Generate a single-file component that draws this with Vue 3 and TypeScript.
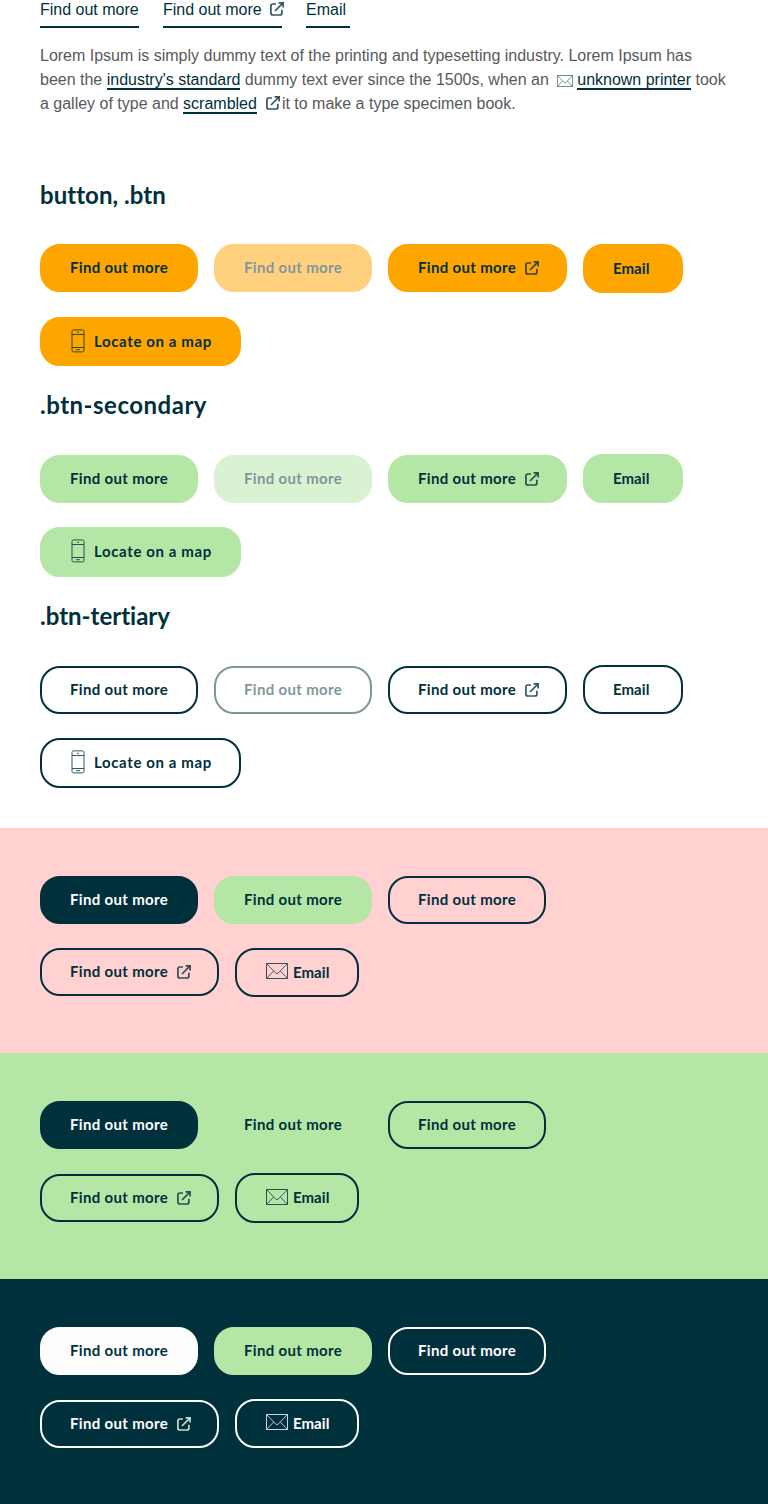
<script setup lang="ts">
import { defineComponent, h } from 'vue'

type IconName = 'external' | 'phone' | 'mail'

interface ButtonItem {
  label: string
  kind: string
  icon?: IconName
}

interface ButtonRow {
  align: string
  items: ButtonItem[]
}

const Icon = defineComponent({
  props: { name: { type: String, required: true } },
  setup(props) {
    return () => {
      if (props.name === 'external') {
        return h('svg', { viewBox: '0 0 14 14', width: 14, height: 14, fill: 'none', stroke: 'currentColor', 'stroke-width': 1.7 }, [
          h('path', { d: 'M6 2H2.9Q.9 2 .9 4v7q0 2 2 2h7q2 0 2-2V7.8' }),
          h('path', { d: 'M5 9 12.8 1.2M8.6.9h4.5v4.5' }),
        ])
      }
      if (props.name === 'phone') {
        return h('svg', { viewBox: '0 0 14 24', width: 14, height: 24, fill: 'none', stroke: 'currentColor', 'stroke-width': 1 }, [
          h('rect', { x: 1, y: 0.9, width: 12, height: 22, rx: 1.5 }),
          h('path', { d: 'M1 5.5h12M1 18.5h12M6 3.3h2M5 20.7h4' }),
        ])
      }
      return h('svg', { viewBox: '0 0 22 16', width: 22, height: 16, fill: 'none', stroke: 'currentColor', 'stroke-width': 1 }, [
        h('path', { d: 'M.5.5h21v15H.5z' }),
        h('path', { 'stroke-width': 0.9, d: 'M.5.5l9.3 9.6q1.2 1.2 2.4 0l9.3-9.6M.5 15.5l7-7.4M21.5 15.5l-7-7.4' }),
      ])
    }
  },
})

const find = 'Find out more'

function group(kind: string, align: string): ButtonRow[] {
  return [
    {
      align,
      items: [
        { label: find, kind },
        { label: find, kind: `${kind} disabled` },
        { label: find, kind, icon: 'external' },
        { label: 'Email', kind: `${kind} plain-mail` },
      ],
    },
    { align: 'second', items: [{ label: 'Locate on a map', kind, icon: 'phone' }] },
  ]
}

const groups = [
  { id: 'primary', title: 'button, .btn', rows: group('primary', 'top') },
  { id: 'secondary', title: '.btn-secondary', rows: group('secondary', 'bottom') },
  { id: 'tertiary', title: '.btn-tertiary', rows: group('tertiary', 'bottom') },
]

function band(first: string, outline: string, align: string): ButtonRow[] {
  return [
    {
      align: 'top',
      items: [
        { label: find, kind: first },
        { label: find, kind: 'secondary' },
        { label: find, kind: outline },
      ],
    },
    {
      align: `second ${align}`,
      items: [
        { label: find, kind: outline, icon: 'external' },
        { label: 'Email', kind: outline, icon: 'mail' },
      ],
    },
  ]
}

const bands = [
  { id: 'pink', rows: band('solid', 'tertiary', 'top') },
  { id: 'green', rows: band('solid', 'tertiary', 'middle') },
  { id: 'dark', rows: band('white', 'inverse', 'bottom') },
]
</script>

<template>
  <main class="page">
    <section class="intro">
      <nav class="links">
        <a class="link find">Find out more</a>
        <a class="link find-ext">Find out more<Icon name="external" class="link-icon" /></a>
        <a class="link mail">Email</a>
      </nav>
      <p class="copy">
        Lorem Ipsum is simply dummy text of the printing and typesetting industry. Lorem Ipsum has<br />
        been the <a>industry's standard</a> dummy text ever since the 1500s, when an
        <Icon name="mail" class="copy-mail" /><a>unknown printer</a> took<br />
        a galley of type and <a>scrambled</a><Icon name="external" class="copy-ext" />it to make a type specimen book.
      </p>
    </section>

    <section v-for="g in groups" :key="g.id" class="group" :class="g.id">
      <h2>{{ g.title }}</h2>
      <div v-for="(row, r) in g.rows" :key="r" class="row" :class="row.align">
        <button v-for="(b, i) in row.items" :key="i" class="btn" :class="[b.kind, b.icon, { email: b.label === 'Email' }]">
          <Icon v-if="b.icon === 'phone'" name="phone" class="icon" />
          <span>{{ b.label }}</span>
          <Icon v-if="b.icon === 'external'" name="external" class="icon" />
        </button>
      </div>
    </section>

    <section v-for="s in bands" :key="s.id" class="band" :class="s.id">
      <div v-for="(row, r) in s.rows" :key="r" class="row" :class="row.align">
        <button v-for="(b, i) in row.items" :key="i" class="btn" :class="[b.kind, b.icon, { email: b.label === 'Email' }]">
          <Icon v-if="b.icon === 'mail'" name="mail" class="icon" />
          <span>{{ b.label }}</span>
          <Icon v-if="b.icon === 'external'" name="external" class="icon" />
        </button>
      </div>
    </section>
  </main>
</template>

<style>
body {
  margin: 0;
  background: #fff;
}
</style>

<style scoped>
.page {
  width: 768px;
  height: 1504px;
  overflow: hidden;
  color: #00303c;
  font-family: "Liberation Sans", Arial, sans-serif;
}
.intro {
  box-sizing: border-box;
  height: 179px;
  padding-left: 40px;
}
.links {
  display: flex;
  gap: 24px;
}
.link {
  box-sizing: border-box;
  height: 28px;
  font-size: 16px;
  line-height: 20px;
  border-bottom: 2px solid #00303c;
  white-space: nowrap;
}
.find {
  width: 99px;
}
.find-ext {
  width: 119px;
}
.mail {
  width: 44px;
}
.link-icon {
  margin-left: 8px;
  vertical-align: -1px;
  opacity: 0.8;
}
.copy {
  margin: 16px 0 0;
  font-size: 16px;
  line-height: 24px;
  color: #58595b;
  white-space: nowrap;
  letter-spacing: -0.005px;
}
.copy a {
  display: inline-block;
  height: 18px;
  line-height: 20px;
  color: #00303c;
  border-bottom: 2px solid #00303c;
}
.copy-mail {
  width: 16px;
  height: 12px;
  margin: 0 4px;
  vertical-align: -2px;
  color: #00303c;
  opacity: 0.8;
}
.copy-ext {
  margin: 0 2px 0 9px;
  vertical-align: -1px;
  color: #00303c;
  opacity: 0.8;
}
h2 {
  margin: 0;
  height: 32px;
  font: 700 24px/32px Lato, sans-serif;
  font-variant-ligatures: none;
  white-space: nowrap;
}
.primary h2 {
  letter-spacing: 0.05px;
}
.secondary h2 {
  letter-spacing: 0.5px;
}
.tertiary h2 {
  letter-spacing: 0;
}
.group {
  box-sizing: border-box;
  padding: 0 40px;
}
.group.primary {
  height: 210px;
}
.group.secondary {
  height: 211px;
}
.group.tertiary {
  height: 228px;
}
.row {
  display: flex;
  gap: 16px;
  height: 49px;
}
.group .row.top {
  margin-top: 33px;
}
.group .row.bottom {
  margin-top: 33px;
}
.group .row.second {
  margin-top: 24px;
}
.top {
  align-items: flex-start;
}
.bottom {
  align-items: flex-end;
}
.middle {
  align-items: center;
}
.btn {
  box-sizing: border-box;
  display: flex;
  align-items: center;
  flex: none;
  width: 158px;
  height: 48px;
  margin: 0;
  padding: 0 0 0 28px;
  border: 2px solid transparent;
  border-radius: 20px;
  font: 700 15px/24px Lato, sans-serif;
  color: #00303c;
  white-space: nowrap;
}
.btn.primary {
  background: #ffa500;
  border-color: #ffa500;
}
.btn.secondary {
  background: #b4e7a5;
  border-color: #b4e7a5;
}
.btn.tertiary {
  background: transparent;
  border-color: #00303c;
}
.btn.solid {
  background: #00303c;
  border-color: #00303c;
  color: #fff;
}
.btn.white {
  background: #fdfdfd;
  border-color: #fdfdfd;
}
.btn.inverse {
  background: transparent;
  border-color: #fff;
  color: #fff;
}
.disabled {
  opacity: 0.5;
}
.btn.external {
  width: 179px;
}
.btn.email {
  height: 49px;
}
.btn.plain-mail {
  width: 100px;
}
.btn.mail {
  width: 124px;
}
.btn.phone {
  width: 201px;
  height: 50px;
}
.btn.primary.phone {
  height: 49px;
}
.icon {
  flex: none;
  opacity: 0.8;
}
.external .icon {
  margin-left: 9px;
}
.phone .icon {
  margin: -2px 9px 0 1px;
}
.btn.mail .icon {
  margin: -3px 5px 0 1px;
}
.btn span {
  margin-top: -2px;
  letter-spacing: 0.33px;
}
.btn.email span {
  letter-spacing: 0.05px;
}
.btn.phone span {
  letter-spacing: 0.62px;
}
.band {
  box-sizing: border-box;
  padding: 48px 40px 0;
}
.band.pink {
  height: 225px;
  background: #ffd1d1;
}
.band.green {
  height: 226px;
  background: #b4e7a5;
}
.band.dark {
  height: 225px;
  background: #00303c;
}
.band .row.second {
  margin-top: 23px;
}
.green .btn.email {
  height: 50px;
}
.green .row.second {
  height: 50px;
}
</style>
